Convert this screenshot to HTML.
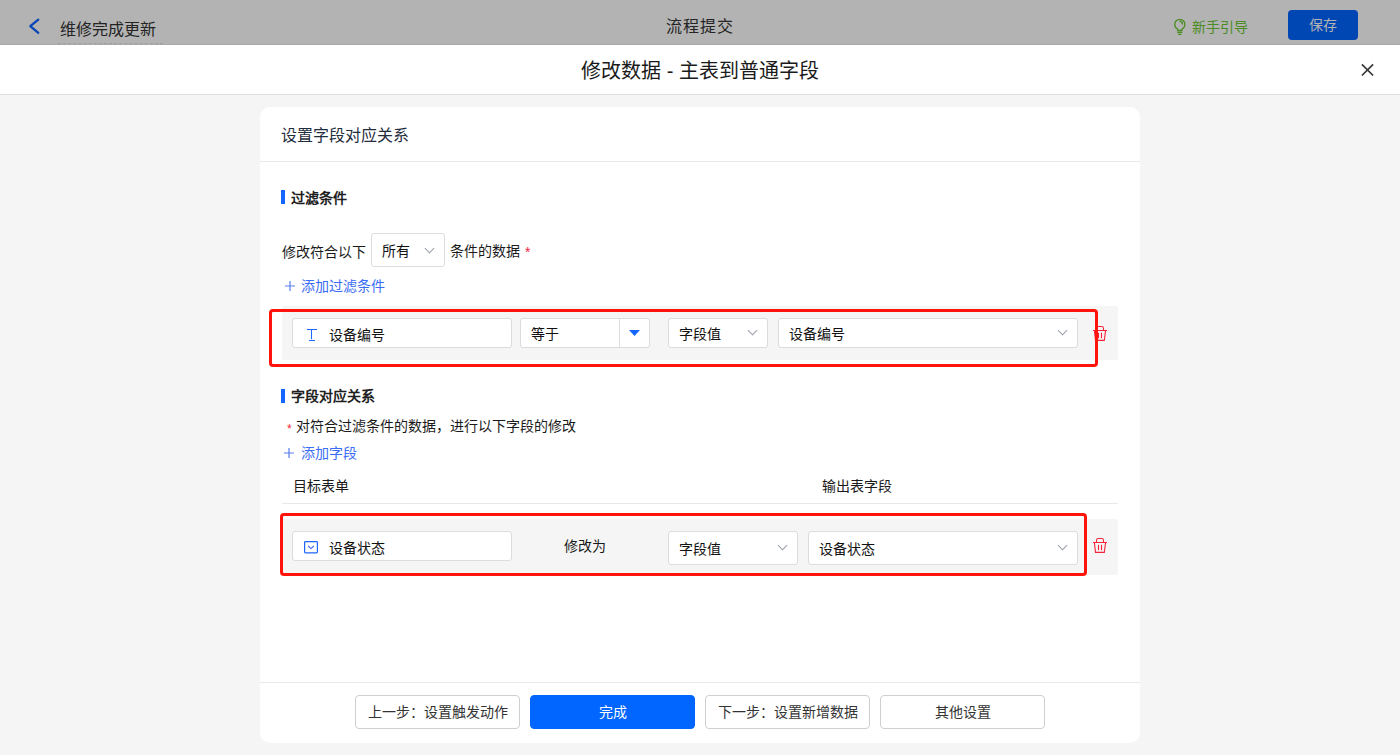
<!DOCTYPE html>
<html lang="zh-CN"><head><meta charset="utf-8">
<style>
*{box-sizing:border-box;margin:0;padding:0}
html,body{width:1400px;height:755px;overflow:hidden;background:#f5f5f5;font-family:"Liberation Sans",sans-serif;color:#1a1a1a;font-size:14px}
.a{position:absolute;white-space:nowrap}
#top{position:absolute;left:0;top:0;width:1400px;height:45px;background:#b3b3b3;border-bottom:1px solid #a9a9a9}
#mh{position:absolute;left:0;top:45px;width:1400px;height:50px;background:#fff;border-bottom:1px solid #e0e0e0}
#card{position:absolute;left:260px;top:107px;width:880px;height:636px;background:#fff;border-radius:10px}
.line{position:absolute;height:1px;background:#e8e8e8}
.bar{position:absolute;width:4px;height:14px;background:#1366ff}
.h3{font-weight:bold;color:#1f1f1f}
.link{color:#3a6cf5}
.row{position:absolute;background:#f5f5f5;border-radius:2px}
.red{position:absolute;border:3px solid #ff130a;border-radius:4px}
.inp{position:absolute;background:#fff;border:1px solid #dcdcdc;border-radius:3px}
.v{color:#111}
.chev{position:absolute;width:7px;height:7px;border-right:1.2px solid #9ba0ac;border-bottom:1.2px solid #9ba0ac;transform:rotate(45deg)}
.btn{position:absolute;top:695px;height:34px;width:165px;border:1px solid #cfcfcf;border-radius:4px;background:#fff;text-align:center;line-height:32px;color:#333}
</style></head><body>
<div id="top">
  <svg class="a" style="left:28px;top:18px" width="12" height="17" viewBox="0 0 12 17"><path d="M10.3 1.6L2.3 8.2L10.3 14.9" fill="none" stroke="#0745b8" stroke-width="2.2" stroke-linecap="round" stroke-linejoin="round"/></svg>
  <div class="a" style="left:60px;top:19px;font-size:16px;line-height:22px;color:#242424">维修完成更新</div>
  <div class="a" style="left:58px;top:43px;width:105px;height:0;border-top:1px dashed #a0a0a0"></div>
  <div class="a" style="left:666px;top:16px;font-size:16px;letter-spacing:1px;line-height:22px;color:#242424">流程提交</div>
  <svg class="a" style="left:1168px;top:14px" width="24" height="24" viewBox="0 0 24 24"><path d="M9.7 16.5V15.3C7.9 14.1 6.7 12.3 6.7 10.4A5.1 5.1 0 0 1 16.9 10.4C16.9 12.3 15.7 14.1 13.9 15.3V16.5Z M9.3 18.3H14.3M10 20.3H13.4M11.4 7.2A3.2 3.2 0 0 1 14.5 10.4" fill="none" stroke="#4b8c23" stroke-width="1.3"/></svg>
  <div class="a" style="left:1192px;top:17px;font-size:14px;line-height:20px;color:#4b8c23">新手引导</div>
  <div class="a" style="left:1288px;top:10px;width:70px;height:30px;background:#0047b3;border-radius:4px;color:#b3b3b3;text-align:center;line-height:30px;font-size:14px">保存</div>
</div>
<div id="mh">
  <div class="a" style="left:0;width:1400px;text-align:center;top:13px;font-size:20px;line-height:26px;color:#1a1a1a">修改数据 - 主表到普通字段</div>
  <svg class="a" style="left:1360px;top:17px" width="15" height="15" viewBox="0 0 15 15"><path d="M1.9 2.3L13.1 13.5M13.1 2.3L1.9 13.5" stroke="#383838" stroke-width="1.7"/></svg>
</div>
<div id="card"></div>
<div class="a" style="left:281px;top:126px;font-size:16px;line-height:20px;color:#1f2d3d">设置字段对应关系</div>
<div class="line" style="left:260px;top:161px;width:880px"></div>
<div class="bar" style="left:281px;top:190px"></div>
<div class="a h3" style="left:291px;top:188px;line-height:20px">过滤条件</div>
<div class="a" style="left:282px;top:242px;line-height:20px">修改符合以下</div>
<div class="inp" style="left:371px;top:233px;width:74px;height:34px"></div>
<div class="a v" style="left:382px;top:241px;line-height:20px">所有</div>
<div class="chev" style="left:426px;top:245px"></div>
<div class="a" style="left:450px;top:241px;line-height:20px">条件的数据 <span style="color:#f52248;position:relative;left:1px;top:1px">*</span></div>
<svg class="a" style="left:285px;top:281px" width="10" height="10" viewBox="0 0 10 10"><path d="M5 0V10M0 5H10" stroke="#5a7ef0" stroke-width="1.2"/></svg>
<div class="a link" style="left:301px;top:276px;line-height:20px">添加过滤条件</div>

<div class="row" style="left:282px;top:306px;width:836px;height:54px"></div>
<div class="inp" style="left:292px;top:318px;width:220px;height:30px"></div>
<svg class="a" style="left:307px;top:329px" width="10" height="12" viewBox="0 0 10 12"><path d="M0 0.5H10M4.5 1V10.3M2 11.5H8" stroke="#1f66ff" stroke-width="1.1"/></svg>
<div class="a v" style="left:329px;top:325px;line-height:20px">设备编号</div>
<div class="inp" style="left:520px;top:318px;width:130px;height:30px"></div>
<div class="line" style="left:619px;top:319px;width:1px;height:28px;background:#dcdcdc"></div>
<div class="a v" style="left:531px;top:324px;line-height:20px">等于</div>
<svg class="a" style="left:629px;top:330px" width="11" height="6" viewBox="0 0 11 6"><path d="M0 0H11L5.5 6Z" fill="#1366ff"/></svg>
<div class="inp" style="left:668px;top:318px;width:100px;height:30px"></div>
<div class="a v" style="left:679px;top:324px;line-height:20px">字段值</div>
<div class="chev" style="left:749px;top:327px"></div>
<div class="inp" style="left:778px;top:318px;width:300px;height:30px"></div>
<div class="a v" style="left:789px;top:324px;line-height:20px">设备编号</div>
<div class="chev" style="left:1059px;top:327px"></div>
<svg class="a trash" style="left:1093px;top:325px" width="14" height="17" viewBox="0 0 14 17"><path d="M0 5.5H14M3.5 5.5V3.4Q3.5 1.5 5.3 1.5H8.7Q10.5 1.5 10.5 3.4V5.5M1.4 5.5L2.5 15.4H11.3L12.6 5.5M5.5 7.8V13.3M8.5 7.8V13.3" fill="none" stroke="#f5223a" stroke-width="1.1"/></svg>
<div class="red" style="left:269px;top:309px;width:829px;height:58px"></div>

<div class="bar" style="left:281px;top:389px"></div>
<div class="a h3" style="left:291px;top:386px;line-height:20px">字段对应关系</div>
<div class="a" style="left:287px;top:416px;line-height:20px"><span style="color:#f5222d;font-size:12px;position:relative;top:2px">*</span>&nbsp;对符合过滤条件的数据，进行以下字段的修改</div>
<svg class="a" style="left:284px;top:448px" width="10" height="10" viewBox="0 0 10 10"><path d="M5 0V10M0 5H10" stroke="#5a7ef0" stroke-width="1.2"/></svg>
<div class="a link" style="left:301px;top:443px;line-height:20px">添加字段</div>
<div class="a" style="left:293px;top:476px;line-height:20px">目标表单</div>
<div class="a" style="left:822px;top:476px;line-height:20px">输出表字段</div>
<div class="line" style="left:282px;top:503px;width:836px"></div>

<div class="row" style="left:282px;top:519px;width:836px;height:56px"></div>
<div class="inp" style="left:292px;top:531px;width:220px;height:30px"></div>
<svg class="a" style="left:304px;top:541px" width="14" height="13" viewBox="0 0 14 13"><rect x="0.6" y="0.6" width="12.8" height="11.2" rx="0.8" fill="none" stroke="#1f66ff" stroke-width="1.2"/><path d="M4.2 5L7 7.6L9.8 5" fill="none" stroke="#3d66ff" stroke-width="1.1"/></svg>
<div class="a v" style="left:329px;top:538px;line-height:20px">设备状态</div>
<div class="a" style="left:564px;top:536px;line-height:20px">修改为</div>
<div class="inp" style="left:668px;top:531px;width:130px;height:34px"></div>
<div class="a v" style="left:679px;top:539px;line-height:20px">字段值</div>
<div class="chev" style="left:779px;top:542px"></div>
<div class="inp" style="left:808px;top:531px;width:270px;height:34px"></div>
<div class="a v" style="left:819px;top:539px;line-height:20px">设备状态</div>
<div class="chev" style="left:1059px;top:542px"></div>
<svg class="a trash" style="left:1093px;top:537px" width="14" height="17" viewBox="0 0 14 17"><path d="M0 5.5H14M3.5 5.5V3.4Q3.5 1.5 5.3 1.5H8.7Q10.5 1.5 10.5 3.4V5.5M1.4 5.5L2.5 15.4H11.3L12.6 5.5M5.5 7.8V13.3M8.5 7.8V13.3" fill="none" stroke="#f5223a" stroke-width="1.1"/></svg>
<div class="red" style="left:280px;top:513px;width:807px;height:63px"></div>

<div class="line" style="left:260px;top:682px;width:880px"></div>
<div class="btn" style="left:355px">上一步：设置触发动作</div>
<div class="btn" style="left:530px;background:#0066ff;border-color:#0066ff;color:#fff">完成</div>
<div class="btn" style="left:705px">下一步：设置新增数据</div>
<div class="btn" style="left:880px">其他设置</div>

</body></html>
